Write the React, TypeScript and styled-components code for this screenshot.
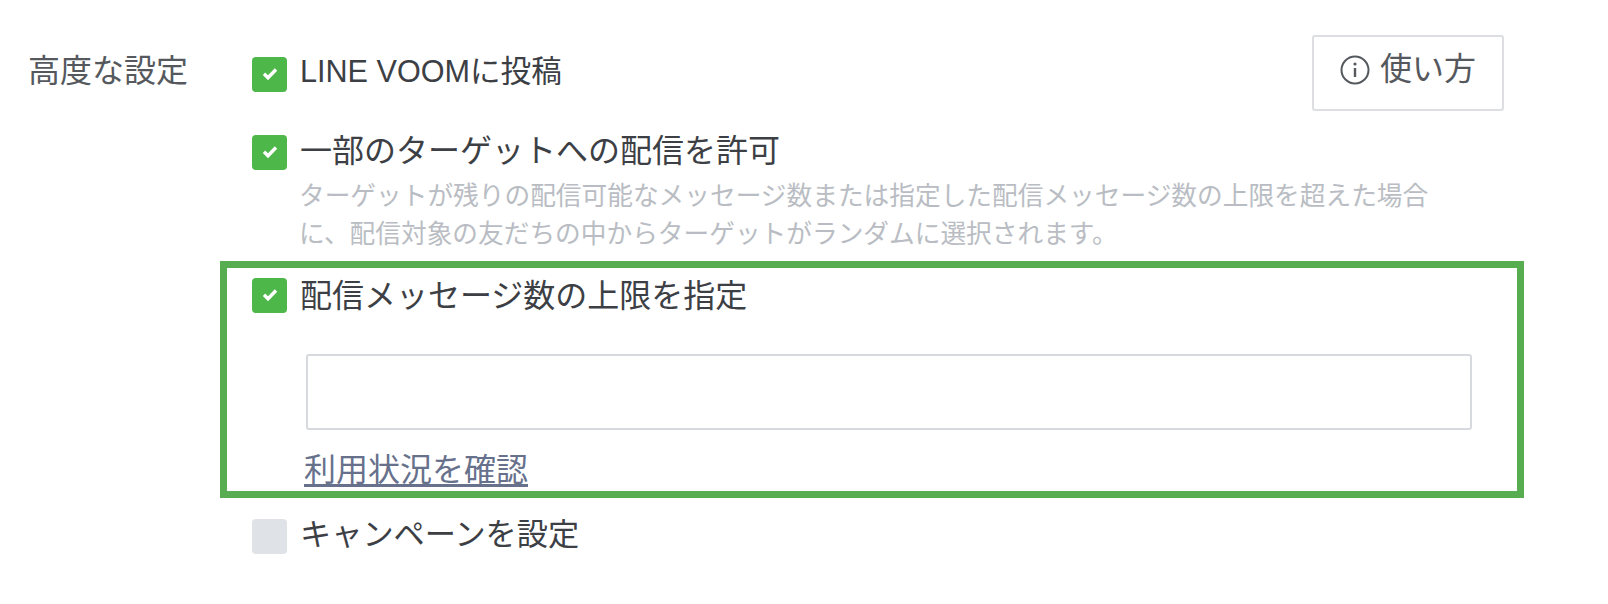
import { createGlobalStyle } from "styled-components";
import styled from "styled-components";

const GlobalStyle = createGlobalStyle`
  html, body {
    margin: 0;
    padding: 0;
    background: #fff;
  }
  body {
    font-family: "Liberation Sans", "Noto Sans CJK JP", sans-serif;
    color: #3c4045;
  }
`;

const Page = styled.div`
  width: 1608px;
  height: 604px;
  box-sizing: border-box;
  padding: 35px 0 0 28px;
  display: flex;
  overflow: hidden;
`;

const SectionLabel = styled.div`
  width: 192px;
  flex: none;
  margin-top: 17px;
  font-size: 32px;
  line-height: 38px;
  color: #55595e;
`;

const Main = styled.div`
  width: 1304px;
  display: flex;
  flex-direction: column;
`;

const TopRow = styled.div`
  height: 76px;
  padding: 0 20px 0 32px;
  display: flex;
  justify-content: space-between;
  margin-bottom: 24px;
`;

const OptionRow = styled.label<{ $offset?: number }>`
  display: flex;
  align-items: center;
  gap: 13px;
  height: 35px;
  margin-top: ${({ $offset }) => $offset ?? 0}px;
  padding-left: ${({ $offset }) => ($offset === 22 ? 0 : 32)}px;
  white-space: nowrap;
`;

const OptionText = styled.span<{ $size?: number; $lift?: number }>`
  font-size: ${({ $size }) => $size ?? 32}px;
  line-height: 38px;
  padding-bottom: ${({ $lift }) => $lift ?? 4}px;
`;

const CheckBox = styled.span<{ $on: boolean }>`
  width: 35px;
  height: 35px;
  flex: none;
  box-sizing: border-box;
  border-radius: 4px;
  background: ${({ $on }) => ($on ? "#4db749" : "#dfe2e6")};
  display: flex;
  align-items: center;
  justify-content: center;
`;

const HelpButton = styled.button`
  width: 192px;
  height: 76px;
  box-sizing: border-box;
  border: 2px solid #dcdee1;
  border-radius: 3px;
  background: #fff;
  display: flex;
  align-items: center;
  justify-content: center;
  gap: 10px;
  font-family: inherit;
  font-size: 32px;
  color: #55595e;
  padding: 0 0 6px;
`;

const HelpLabel = styled.span`
  line-height: 38px;
  padding-bottom: 3px;
`;

const Description = styled.p`
  margin: 7px 0 8px 79px;
  width: 1144px;
  font-size: 25.7px;
  line-height: 38px;
  color: #b9bdc3;
`;

const Highlight = styled.div`
  box-sizing: border-box;
  height: 237px;
  border: 7px solid #57ad4f;
  padding-top: 10px;
  display: flex;
  flex-direction: column;
`;

const HighlightRow = styled(OptionRow)`
  padding-left: 25px;
`;

const LimitInput = styled.input`
  display: block;
  box-sizing: border-box;
  width: 1166px;
  height: 76px;
  margin: 41px 0 0 79px;
  border: 2px solid #d6d9dd;
  border-radius: 3px;
  background: #fff;
`;

const UsageLink = styled.a`
  align-self: flex-start;
  margin: 21px 0 0 77px;
  font-size: 32px;
  line-height: 38px;
  color: #67718c;
  text-decoration: underline;
  text-underline-offset: 3px;
`;

const LastRow = styled(OptionRow)`
  margin-top: 21px;
`;

const Check = () => (
  <svg width="18" height="15" viewBox="0 0 18 15" fill="none">
    <path d="M3 6.8 7 10.8 15 2.5" stroke="#fff" strokeWidth="3.4" />
  </svg>
);

const InfoIcon = () => (
  <svg width="30" height="30" viewBox="0 0 30 30" fill="none">
    <circle cx="15" cy="15" r="13.5" stroke="#55595e" strokeWidth="2" />
    <path d="M15 13v9" stroke="#55595e" strokeWidth="2.4" />
    <circle cx="15" cy="9" r="1.6" fill="#55595e" />
  </svg>
);

export default function App() {
  return (
    <>
      <GlobalStyle />
      <Page>
        <SectionLabel>高度な設定</SectionLabel>
        <Main>
          <TopRow>
            <OptionRow $offset={22}>
              <CheckBox $on>
                <Check />
              </CheckBox>
              <OptionText $size={30.6} $lift={8}>
                LINE VOOMに投稿
              </OptionText>
            </OptionRow>
            <HelpButton>
              <InfoIcon />
              <HelpLabel>使い方</HelpLabel>
            </HelpButton>
          </TopRow>
          <OptionRow>
            <CheckBox $on>
              <Check />
            </CheckBox>
            <OptionText>一部のターゲットへの配信を許可</OptionText>
          </OptionRow>
          <Description>
            ターゲットが残りの配信可能なメッセージ数または指定した配信メッセージ数の上限を超えた場合に、配信対象の友だちの中からターゲットがランダムに選択されます。
          </Description>
          <Highlight>
            <HighlightRow>
              <CheckBox $on>
                <Check />
              </CheckBox>
              <OptionText $lift={0}>配信メッセージ数の上限を指定</OptionText>
            </HighlightRow>
            <LimitInput />
            <UsageLink href="#">利用状況を確認</UsageLink>
          </Highlight>
          <LastRow>
            <CheckBox $on={false} />
            <OptionText $size={31.2} $lift={4}>
              キャンペーンを設定
            </OptionText>
          </LastRow>
        </Main>
      </Page>
    </>
  );
}
